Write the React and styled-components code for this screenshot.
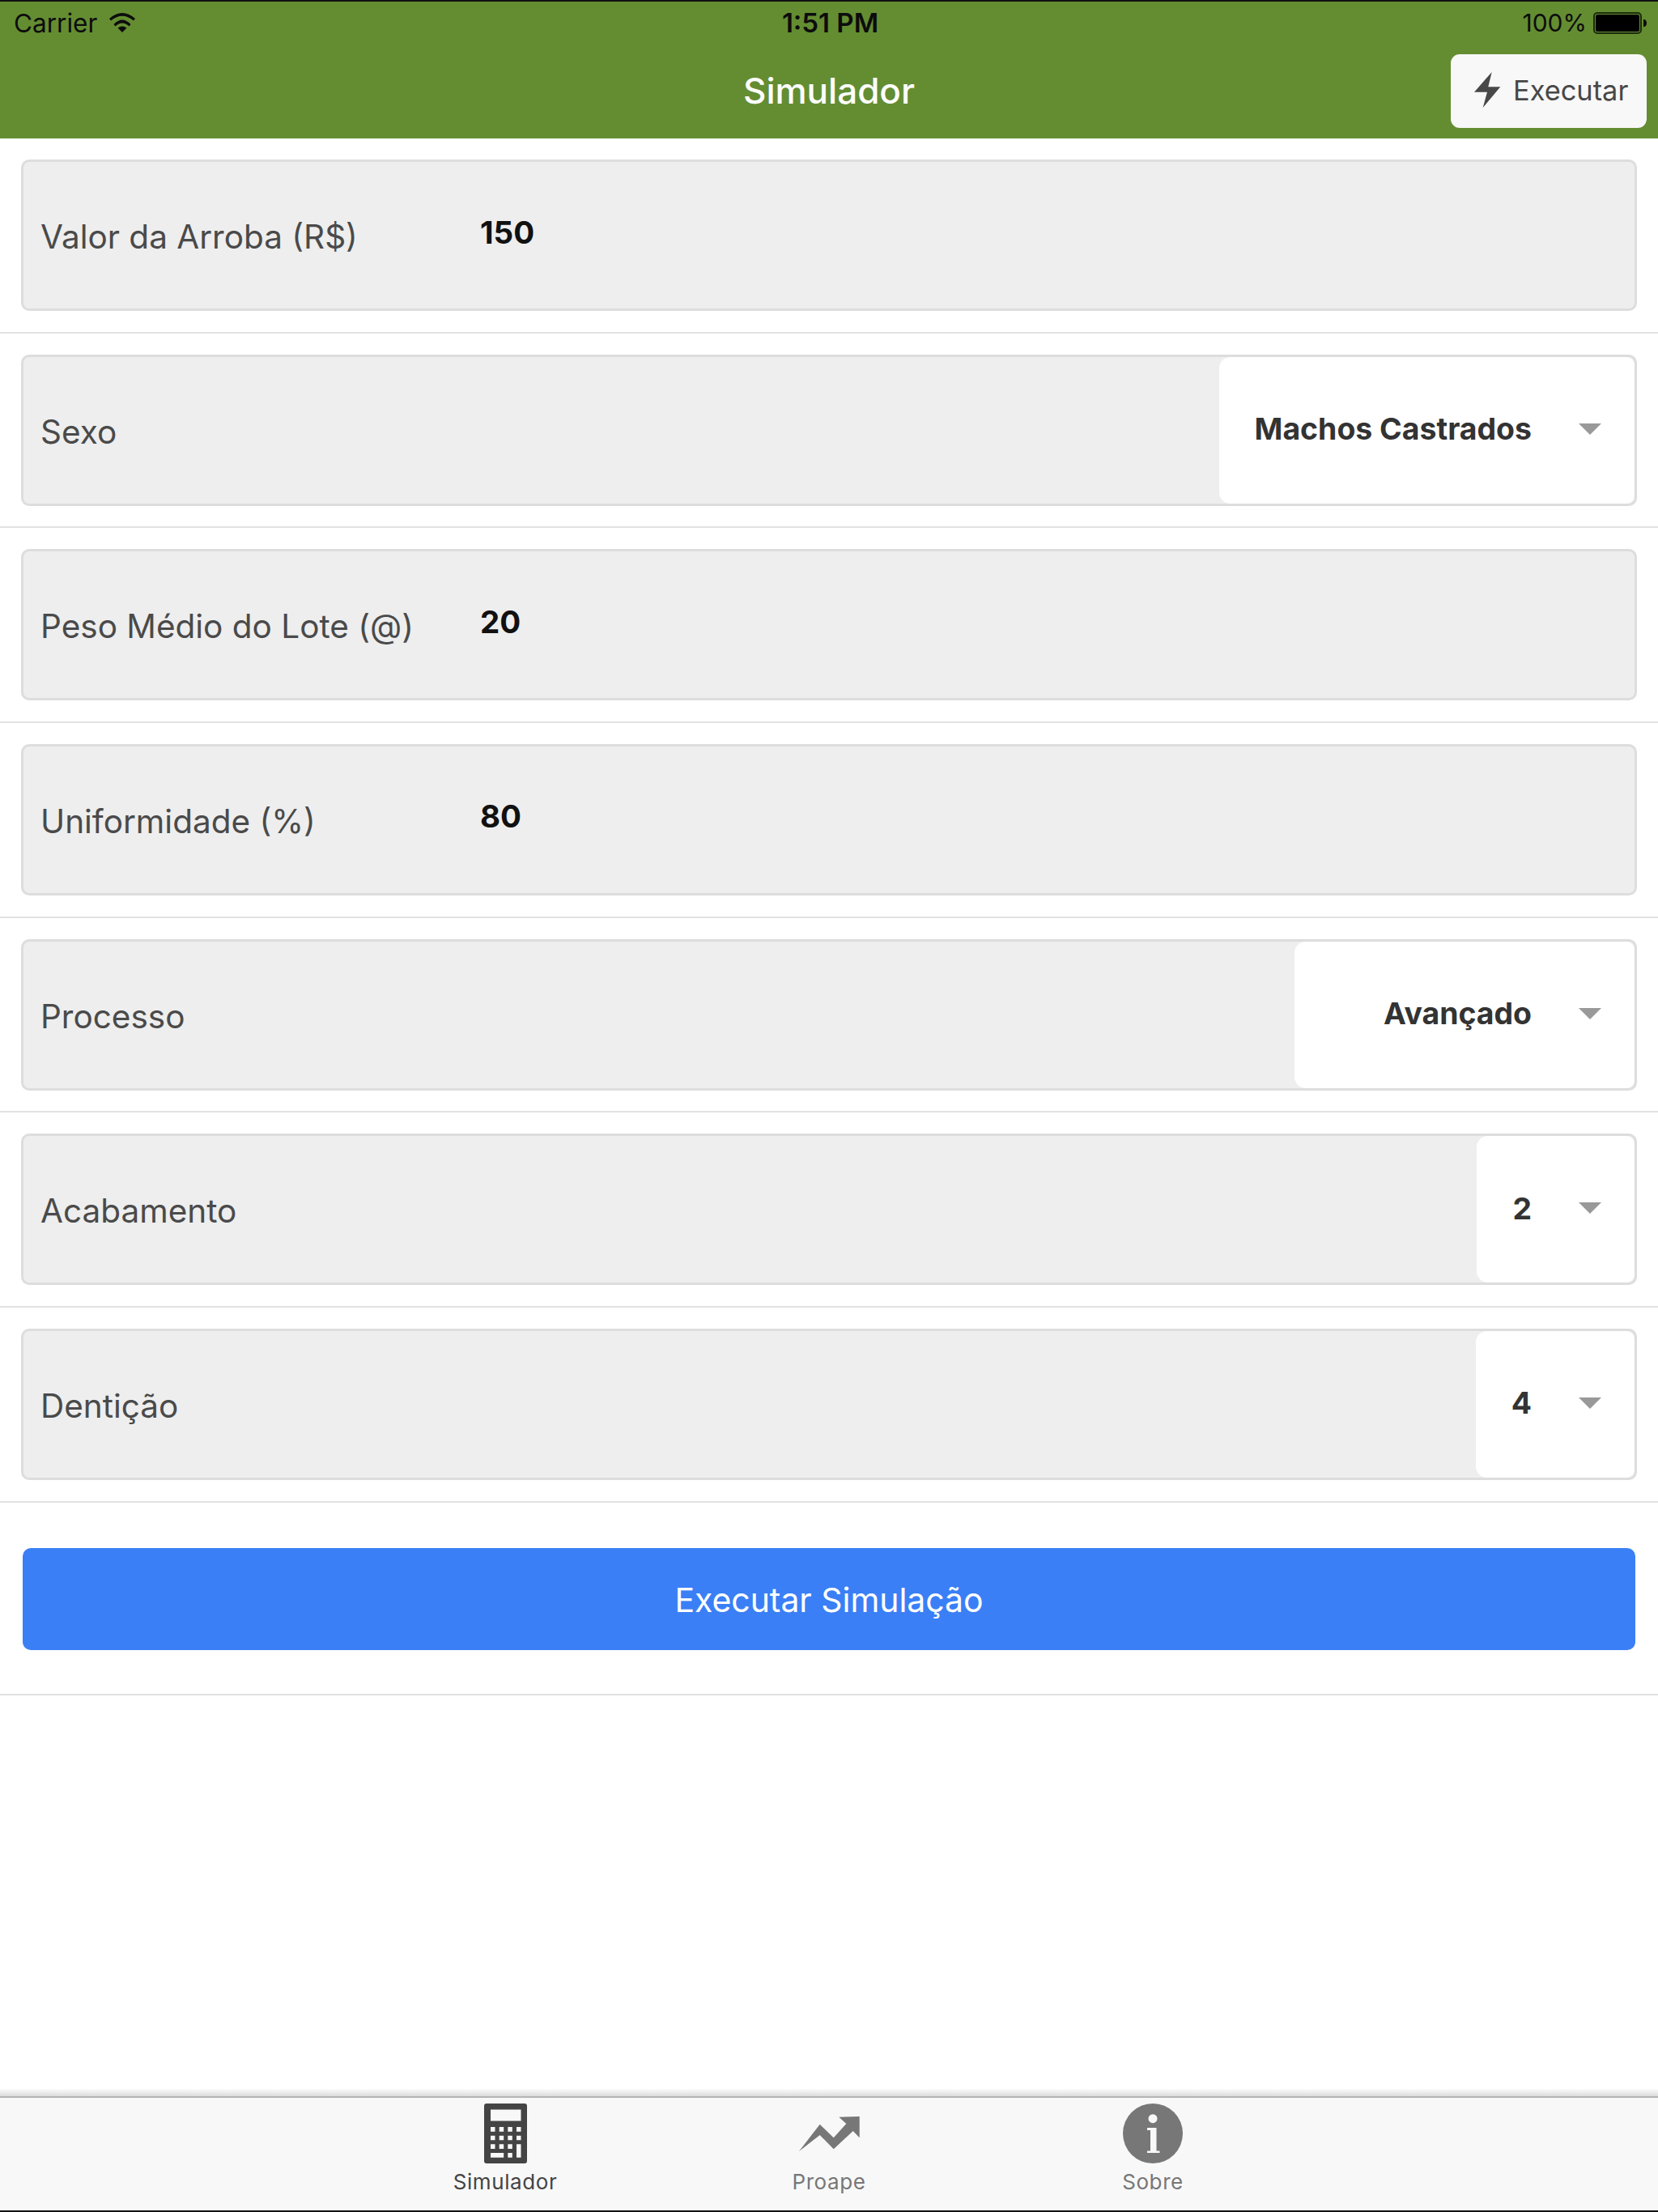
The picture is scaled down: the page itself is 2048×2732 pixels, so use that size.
import React from 'react';
import styled, { createGlobalStyle } from 'styled-components';

const GlobalStyle = createGlobalStyle`
    html, body {
        margin: 0;
        padding: 0;
        background: #fff;
    }

    * {
        box-sizing: border-box;
    }
`;

const Page = styled.div`
    width: 2048px;
    height: 2732px;
    display: flex;
    flex-direction: column;
    background: #fff;
    font-family: Inter, "Liberation Sans", sans-serif;
`;

const Header = styled.header`
    height: 171px;
    flex-shrink: 0;
    background: #648d32;
    border-top: 2px solid #111;
`;

const StatusBar = styled.div`
    height: 50px;
    padding: 2px 14px 0 17px;
    display: grid;
    grid-template-columns: 1fr auto 1fr;
    align-items: center;
    font-size: 30px;
    color: #0c0c0c;
`;

const StatusLeft = styled.div`
    display: flex;
    align-items: center;
    gap: 15px;
    font-size: 31.5px;
`;

const StatusTime = styled.div`
    font-weight: 600;
    font-size: 33px;
`;

const StatusRight = styled.div`
    display: flex;
    align-items: center;
    justify-content: flex-end;
    gap: 8px;
`;

const NavBar = styled.div`
    height: 119px;
    padding: 15px 14px 13px;
    display: grid;
    grid-template-columns: 1fr auto 1fr;
    align-items: center;
`;

const Title = styled.div`
    grid-column: 2;
    padding-bottom: 1px;
    color: #fff;
    font-size: 44px;
    font-weight: 500;
`;

const NavButton = styled.button`
    justify-self: end;
    width: 242px;
    height: 91px;
    padding: 0 0 3px 29px;
    display: flex;
    align-items: center;
    gap: 15px;
    border: 0;
    border-radius: 11px;
    background: #f8f8f8;
    color: #484848;
    font-family: inherit;
    font-size: 34.4px;
`;

const Form = styled.main`
    flex: 1;
`;

const Row = styled.div`
    height: 240.67px;
    padding: 26px 26px 0;
    border-bottom: 2px solid #e2e2e2;
`;

const Field = styled.div`
    height: 187px;
    display: flex;
    align-items: stretch;
    justify-content: space-between;
    background: #eee;
    border: 3px solid #ddd;
    border-radius: 10px;
`;

const Label = styled.div`
    width: ${(props) => (props.$input ? '564px' : 'auto')};
    padding: 4px 0 0 21px;
    display: flex;
    align-items: center;
    color: #4a4a4a;
    font-size: 40.5px;
    white-space: nowrap;
`;

const Value = styled.div`
    flex: 1;
    padding-bottom: 8px;
    display: flex;
    align-items: center;
    color: #111;
    font-size: 38.5px;
    font-weight: 700;
`;

const Picker = styled.div`
    width: ${(props) => props.$width || 'auto'};
    padding: 0 41px 3px 44px;
    display: flex;
    align-items: center;
    justify-content: flex-end;
    gap: 58px;
    background: #fff;
    border-radius: 14px 10px 10px 14px;
    color: #333;
    font-size: 37.4px;
    font-weight: 700;
`;

const Caret = styled.span`
    width: 0;
    height: 0;
    border-left: 14px solid transparent;
    border-right: 14px solid transparent;
    border-top: 14px solid #999;
`;

const ButtonRow = styled.div`
    padding: 56px 28px 54px;
    border-bottom: 2px solid #e2e2e2;
`;

const RunButton = styled.button`
    width: 100%;
    height: 126px;
    padding: 2px 0 0;
    display: block;
    border: 0;
    border-radius: 10px;
    background: #3a7ff6;
    color: #fff;
    font-family: inherit;
    font-size: 40.9px;
`;

const TabShadow = styled.div`
    height: 11px;
    flex-shrink: 0;
    background: linear-gradient(#fbfbfb, #dcdcdc);
    border-bottom: 2px solid #b4b4b4;
`;

const TabBar = styled.nav`
    height: 141px;
    flex-shrink: 0;
    display: flex;
    justify-content: center;
    background: #f8f8f8;
    border-bottom: 2px solid #111;
`;

const Tab = styled.div`
    width: 400px;
    padding-top: 7px;
    display: flex;
    flex-direction: column;
    align-items: center;
    color: ${(props) => (props.$active ? '#444' : '#777')};
    font-size: 26px;
    letter-spacing: 0.6px;
`;

const TabIcon = styled.div`
    height: 74px;
    margin-bottom: 7px;
    display: flex;
    align-items: center;
`;

const WifiIcon = () => (
    <svg width="32" height="24" viewBox="0 0 32 24">
        <path d="M0 7 Q16 -7 32 7 L30 9.5 Q16 -2 2 9.5 Z" fill="#0c0c0c" />
        <path d="M5.5 14 Q16 3 26.5 14 L24.5 16.5 Q16 8.5 7.5 16.5 Z" fill="#0c0c0c" />
        <path d="M10.5 18.5 Q16 14.5 21.5 18.5 L16 24 Z" fill="#0c0c0c" />
    </svg>
);

const BatteryIcon = () => (
    <svg width="66" height="27" viewBox="0 0 66 27">
        <rect x="1" y="1" width="58" height="25" rx="4" fill="none" stroke="#1c2c0c" strokeWidth="2" />
        <rect x="3" y="3" width="54" height="21" rx="2.5" fill="#000" />
        <path d="M62 9 C65 9 66 11 66 13.5 C66 16 65 18 62 18 Z" fill="#0c0c0c" />
    </svg>
);

const BoltIcon = () => (
    <svg width="33" height="44" viewBox="0 0 33 44">
        <path d="M21.7 0 L0 24.7 H16 L10.7 44 L32.3 18.3 H17.3 Z" fill="#484848" />
    </svg>
);

const CalculatorIcon = () => (
    <svg width="53" height="74" viewBox="0 0 53 74">
        <path
            fillRule="evenodd"
            fill="#444"
            d="M3 0H50A3 3 0 0 1 53 3V71A3 3 0 0 1 50 74H3A3 3 0 0 1 0 71V3A3 3 0 0 1 3 0Z
               M8 7.5V21.5H45.5V7.5Z
               M8 29V34.7H13.5V29Z M18.7 29V34.7H24.2V29Z M29.3 29V34.7H34.8V29Z M40 29V34.7H45.5V29Z
               M8 39.7V45.3H13.5V39.7Z M18.7 39.7V45.3H24.2V39.7Z M29.3 39.7V45.3H34.8V39.7Z M40 39.7V45.3H45.5V39.7Z
               M8 50.3V56H13.5V50.3Z M18.7 50.3V56H24.2V50.3Z M29.3 50.3V56H34.8V50.3Z M40 50.3V66.7H45.5V50.3Z
               M8 61V66.7H24.2V61Z M29.3 61V66.7H34.8V61Z"
        />
    </svg>
);

const TrendIcon = () => (
    <svg width="75" height="43" viewBox="0 0 75 43">
        <path d="M0 43 L25.7 9.7 L42.7 26.3 L58.3 9 L49.3 0.7 L74.7 0 V26.3 L66.7 18 L42.7 40.3 L25.7 23 Z" fill="#777" />
    </svg>
);

const InfoIcon = () => (
    <svg width="74" height="74" viewBox="0 0 74 74">
        <circle cx="37" cy="37" r="37" fill="#777" />
        <circle cx="37" cy="18.7" r="5.5" fill="#f8f8f8" />
        <path d="M30 30 H41.5 V58.5 H45.5 V61 H30 V58.5 H34 V33 H30 Z" fill="#f8f8f8" />
    </svg>
);

const fields = [
    { label: 'Valor da Arroba (R$)', value: '150' },
    { label: 'Sexo', option: 'Machos Castrados' },
    { label: 'Peso Médio do Lote (@)', value: '20' },
    { label: 'Uniformidade (%)', value: '80' },
    { label: 'Processo', option: 'Avançado', width: '420px' },
    { label: 'Acabamento', option: '2' },
    { label: 'Dentição', option: '4' },
];

const App = () => {
    return (
        <Page>
            <GlobalStyle />
            <Header>
                <StatusBar>
                    <StatusLeft>
                        Carrier
                        <WifiIcon />
                    </StatusLeft>
                    <StatusTime>1:51 PM</StatusTime>
                    <StatusRight>
                        100%
                        <BatteryIcon />
                    </StatusRight>
                </StatusBar>
                <NavBar>
                    <Title>Simulador</Title>
                    <NavButton>
                        <BoltIcon />
                        Executar
                    </NavButton>
                </NavBar>
            </Header>
            <Form>
                {fields.map((field) => (
                    <Row key={field.label}>
                        <Field>
                            <Label $input={field.value !== undefined}>{field.label}</Label>
                            {field.value !== undefined && <Value>{field.value}</Value>}
                            {field.option !== undefined && (
                                <Picker $width={field.width}>
                                    {field.option}
                                    <Caret />
                                </Picker>
                            )}
                        </Field>
                    </Row>
                ))}
                <ButtonRow>
                    <RunButton>Executar Simulação</RunButton>
                </ButtonRow>
            </Form>
            <TabShadow />
            <TabBar>
                <Tab $active>
                    <TabIcon><CalculatorIcon /></TabIcon>
                    Simulador
                </Tab>
                <Tab>
                    <TabIcon><TrendIcon /></TabIcon>
                    Proape
                </Tab>
                <Tab>
                    <TabIcon><InfoIcon /></TabIcon>
                    Sobre
                </Tab>
            </TabBar>
        </Page>
    );
};

export default App;
